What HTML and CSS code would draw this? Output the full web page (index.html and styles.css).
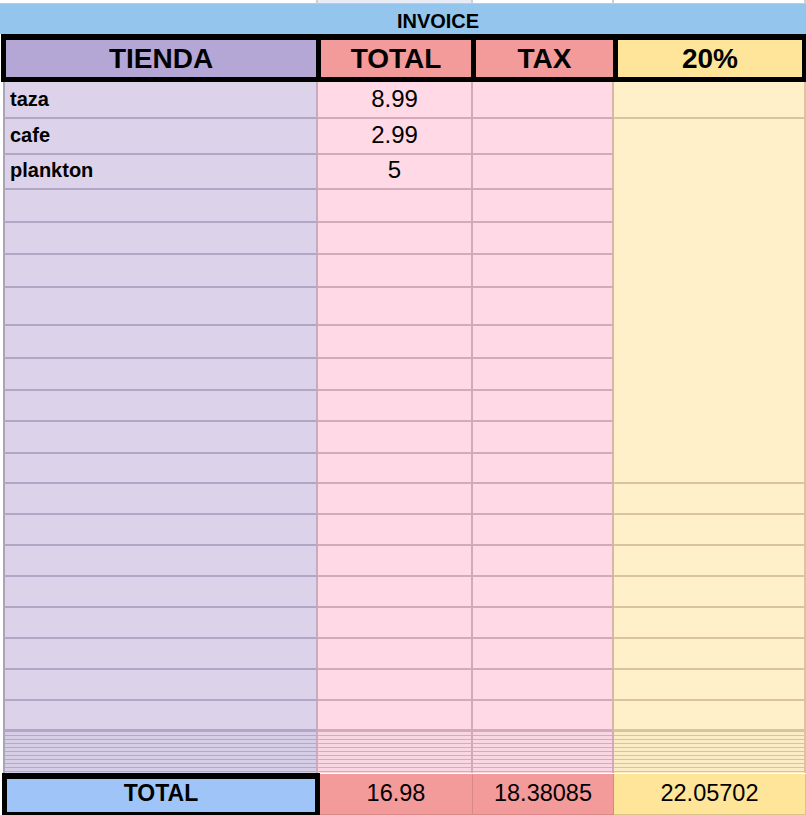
FILE: index.html
```html
<!DOCTYPE html>
<html lang="es">
<head>
<meta charset="utf-8">
<title>Invoice</title>
<link rel="stylesheet" href="styles.css">
</head>
<body>
<div class="sheet">
  <div class="toprow">
    <div class="tc tc-a"></div>
    <div class="tc tc-b"></div>
    <div class="tc tc-c"></div>
    <div class="tc tc-d"></div>
  </div>
  <div class="band">INVOICE</div>
  <div class="head">
    <div class="hc hc-a">TIENDA</div>
    <div class="hc hc-b">TOTAL</div>
    <div class="hc hc-c">TAX</div>
    <div class="hc hc-d">20%</div>
  </div>
  <div class="data">
    <div class="merge">&nbsp;</div>

    <div class="c a name">taza</div><div class="c b num">8.99</div><div class="c p"></div><div class="c d"></div>
    <div class="c a name">cafe</div><div class="c b num">2.99</div><div class="c p"></div>
    <div class="c a name">plankton</div><div class="c b num">5</div><div class="c p"></div>
    <div class="c a"></div><div class="c b"></div><div class="c p"></div>
    <div class="c a"></div><div class="c b"></div><div class="c p"></div>
    <div class="c a"></div><div class="c b"></div><div class="c p"></div>
    <div class="c a"></div><div class="c b"></div><div class="c p"></div>
    <div class="c a"></div><div class="c b"></div><div class="c p"></div>
    <div class="c a"></div><div class="c b"></div><div class="c p"></div>
    <div class="c a"></div><div class="c b"></div><div class="c p"></div>
    <div class="c a"></div><div class="c b"></div><div class="c p"></div>
    <div class="c a"></div><div class="c b"></div><div class="c p"></div>
    <div class="c a"></div><div class="c b"></div><div class="c p"></div><div class="c d"></div>
    <div class="c a"></div><div class="c b"></div><div class="c p"></div><div class="c d"></div>
    <div class="c a"></div><div class="c b"></div><div class="c p"></div><div class="c d"></div>
    <div class="c a"></div><div class="c b"></div><div class="c p"></div><div class="c d"></div>
    <div class="c a"></div><div class="c b"></div><div class="c p"></div><div class="c d"></div>
    <div class="c a"></div><div class="c b"></div><div class="c p"></div><div class="c d"></div>
    <div class="c a"></div><div class="c b"></div><div class="c p"></div><div class="c d"></div>
    <div class="c a"></div><div class="c b"></div><div class="c p"></div><div class="c d"></div>
  </div>
  <div class="hidden">
    <div class="h h-a"></div>
    <div class="h h-b"></div>
    <div class="h h-c"></div>
    <div class="h h-d"></div>
  </div>
  <div class="totals">
    <div class="t t-a">TOTAL</div>
    <div class="t t-b">16.98</div>
    <div class="t t-c">18.38085</div>
    <div class="t t-d">22.05702</div>
  </div>
</div>
</body>
</html>
```
FILE: styles.css
```css
* { box-sizing: border-box; }
html, body { margin: 0; padding: 0; background: #ffffff; }
body { font-family: "Liberation Sans", Arial, sans-serif; color: #000; }
.sheet { width: 806px; height: 815px; overflow: hidden; }

.toprow { display: grid; grid-template-columns: 318px 155px 141px 192px; height: 4px; }
.tc { border-bottom: 1px solid #c8c8c8; border-right: 2px solid #d0d0d0; }
.tc-b { background: #e9ebf7; }

.band {
  height: 30px;
  background: #94c5ec;
  display: flex; align-items: center; justify-content: center;
  padding: 3px 0 0 70px;
  font-weight: bold; font-size: 20px; line-height: 1;
}

.head {
  margin-left: 1px; width: 805px; height: 48px;
  background: #000;
  padding: 6px 4px 5px 5px;
  display: grid; grid-template-columns: 310px 150px 137px 184px; column-gap: 5px;
}
.hc { display: flex; align-items: center; justify-content: center; font-weight: bold; font-size: 28px; padding-top: 1px; }
.hc-a { background: #b4a7d6; }
.hc-b, .hc-c { background: #f39a9a; }
.hc-d { background: #ffe599; }

.data {
  margin-left: 3px; width: 803px;
  display: grid;
  grid-template-columns: 315px 155px 141px 192px;
  grid-template-rows: 37px 36px 35px 33px 32px 33px 38px 33px 32px 31px 32px 30px 31px 31px 31px 31px 31px 31px 31px 30px;
}
.c { border-bottom: 2px solid; border-right: 2px solid; display: flex; align-items: flex-end; }
.a { background: #dcd3ea; border-left: 2px solid #aaa4b4; border-bottom-color: #b1a7c4; border-right-color: #c9abc0; }
.b, .p { background: #ffdae6; border-bottom-color: #d4a9ba; border-right-color: #d1a9b9; }
.p { border-right-color: #d6b7a8; }
.d { background: #fff0ca; border-bottom-color: #d9c49d; border-right-color: #d9c49d; }
.merge {
  grid-column: 4; grid-row: 2 / span 11;
  background: #fff0ca; border-bottom: 2px solid #d9c49d; border-right: 2px solid #d9c49d;
}
.name { font-weight: bold; font-size: 20px; line-height: 1; padding: 0 0 8px 5px; }
.num { justify-content: center; font-size: 24px; line-height: 1; padding-bottom: 6px; }

.hidden {
  margin-left: 3px; width: 803px; height: 42px;
  display: grid; grid-template-columns: 315px 155px 141px 192px;
}
.h { border-right: 2px solid; }
.h-a { border-left: 2px solid #aaa4b4; border-right-color: #c9abc0;
  background: repeating-linear-gradient(to bottom, #b3a9c6 0 1px, #d6cee6 1px 4px); }
.h-b, .h-c { border-right-color: #d1a9b9;
  background: repeating-linear-gradient(to bottom, #d6aabb 0 1px, #f8d6e2 1px 4px); }
.h-d { border-right-color: #d9c49d;
  background: repeating-linear-gradient(to bottom, #d8c49c 0 1px, #fbecc6 1px 4px); }

.totals {
  margin-left: 2px; width: 804px; height: 44px;
  display: grid; grid-template-columns: 318px 153px 141px 192px; align-items: start;
}
.t { display: flex; align-items: flex-end; justify-content: center; line-height: 1; }
.t-a {
  height: 44px; background: #9fc5f8; border: 5px solid #000; border-top-width: 6px;
  font-weight: bold; font-size: 23px; padding-bottom: 7px;
}
.t-b, .t-c, .t-d { height: 41px; margin-top: 1px; font-size: 23.5px; padding-bottom: 9px; border-bottom: 1px solid; border-right: 1px solid; }
.t-b, .t-c { background: #f39a9a; border-color: #d98888; }
.t-d { background: #ffe599; border-color: #dcc38a; }
```
